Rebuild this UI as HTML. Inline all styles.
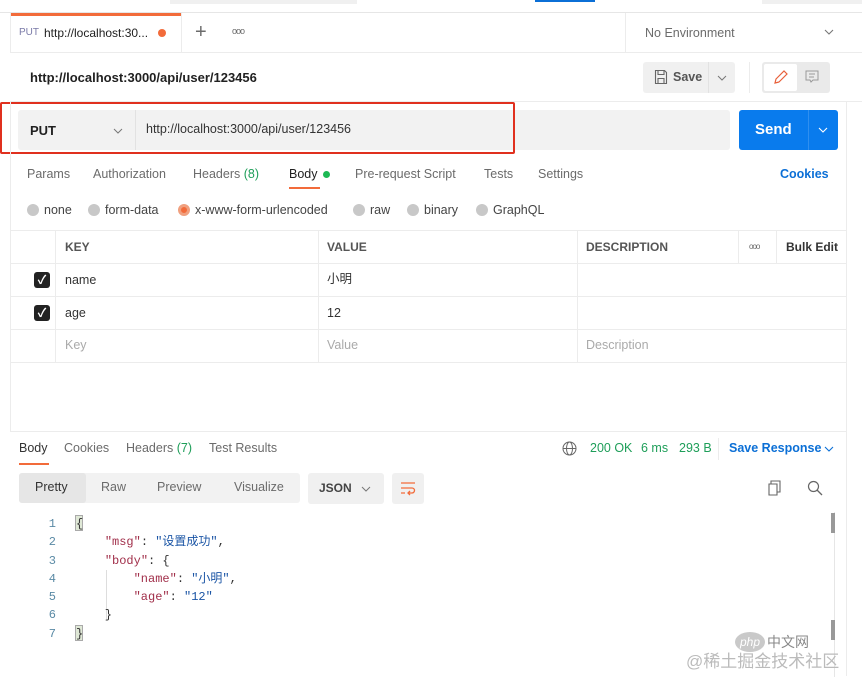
<!DOCTYPE html>
<html><head><meta charset="utf-8"><style>
*{margin:0;padding:0;box-sizing:border-box}
body{width:862px;height:675px;background:#fff;font-family:"Liberation Sans","Noto Sans CJK SC",sans-serif;font-size:12.5px;color:#212121;position:relative;overflow:hidden}
.a{position:absolute;white-space:nowrap}
.g{color:#6b6b6b}
.mono{font-family:"Liberation Mono","Noto Sans CJK SC",monospace;font-size:12px}
.hl{position:absolute;background:#ececec;height:1px}
.vl{position:absolute;background:#ececec;width:1px}
.cb{position:absolute;width:16px;height:16px;background:#222;border-radius:3px;color:#fff;font-size:12px;line-height:16px;text-align:center;font-weight:bold}
.rd{display:inline-block;width:12px;height:12px;border-radius:50%;background:#c8c8c8;vertical-align:-2px;margin-right:5px}
</style></head><body>
<div class="a" style="left:170px;top:0;width:187px;height:4px;background:#f0f0f0"></div>
<div class="a" style="left:535px;top:0;width:60px;height:2px;background:#0b6fd6"></div>
<div class="a" style="left:762px;top:0;width:100px;height:4px;background:#f0f0f0"></div>
<div class="hl" style="left:0;top:12px;width:862px;background:#e6e6e6"></div>
<div class="a" style="left:10px;top:13px;width:171px;height:3px;background:#f26b3a"></div>
<div class="vl" style="left:10px;top:13px;height:40px"></div>
<div class="vl" style="left:181px;top:13px;height:40px"></div>
<div class="a" style="left:19px;top:27px;font-size:10px;color:#7a7aa8">PUT</div>
<div class="a" style="left:44px;top:26px;font-size:12px">http://localhost:30...</div>
<div class="a" style="left:158px;top:29px;width:8px;height:8px;border-radius:50%;background:#f26b3a"></div>
<div class="a g" style="left:195px;top:21px;font-size:20px;font-weight:300">+</div>
<div class="a g" style="left:232px;top:26px;font-size:9px;letter-spacing:-1px">ooo</div>
<div class="vl" style="left:625px;top:13px;height:40px"></div>
<div class="a g" style="left:645px;top:26px">No Environment</div>
<svg class="a" style="left:824px;top:29px" width="10" height="6" viewBox="0 0 10 6"><path d="M1 1l4 4 4-4" fill="none" stroke="#777" stroke-width="1.1"/></svg>
<div class="hl" style="left:10px;top:52px;width:852px"></div>
<div class="a" style="left:30px;top:70px;font-size:13px;font-weight:bold">http://localhost:3000/api/user/123456</div>
<div class="a" style="left:643px;top:62px;width:92px;height:31px;background:#f0f0f0;border-radius:3px"></div>
<div class="vl" style="left:708px;top:62px;height:31px;background:#e2e2e2"></div>
<svg class="a" style="left:654px;top:69px" width="14" height="16" viewBox="0 0 14 16"><path d="M1.5 1.5h9l2 2v11h-11z M4 1.5v4h6v-4 M4 14.5v-5h6v5" fill="none" stroke="#666" stroke-width="1.1"/></svg>
<div class="a" style="left:673px;top:70px;font-weight:bold;color:#555">Save</div>
<svg class="a" style="left:717px;top:75px" width="10" height="6" viewBox="0 0 10 6"><path d="M1 1l4 4 4-4" fill="none" stroke="#777" stroke-width="1"/></svg>
<div class="vl" style="left:749px;top:62px;height:31px"></div>
<div class="a" style="left:762px;top:62px;width:68px;height:31px;background:#eaeaea;border-radius:3px"></div>
<div class="a" style="left:764px;top:64px;width:33px;height:27px;background:#fff;border-radius:2px"></div>
<svg class="a" style="left:772px;top:68px" width="16" height="18" viewBox="0 0 16 18"><path d="M3 15l1-4 8-8 3 3-8 8z M3 15l4-1" fill="none" stroke="#e8603a" stroke-width="1.2"/></svg>
<svg class="a" style="left:804px;top:69px" width="16" height="16" viewBox="0 0 16 16"><path d="M2 2h12v9H9l-2 2-1-2H2z M5 5h6 M5 8h5" fill="none" stroke="#999" stroke-width="1"/></svg>
<div class="hl" style="left:10px;top:101px;width:852px"></div>
<div class="a" style="left:18px;top:110px;width:712px;height:40px;background:#f2f2f2;border-radius:3px"></div>
<div class="vl" style="left:135px;top:110px;height:40px;background:#e2e2e2"></div>
<div class="a" style="left:30px;top:123px;font-weight:bold;font-size:13px">PUT</div>
<svg class="a" style="left:113px;top:128px" width="10" height="6" viewBox="0 0 10 6"><path d="M1 1l4 4 4-4" fill="none" stroke="#777" stroke-width="1"/></svg>
<div class="a" style="left:146px;top:122px;font-size:12.5px;color:#333">http://localhost:3000/api/user/123456</div>
<div class="a" style="left:739px;top:110px;width:99px;height:40px;background:#097bed;border-radius:3px"></div>
<div class="vl" style="left:808px;top:110px;height:40px;background:#2f8ff0"></div>
<div class="a" style="left:755px;top:121px;color:#fff;font-weight:bold;font-size:15px">Send</div>
<svg class="a" style="left:818px;top:127px" width="10" height="6" viewBox="0 0 10 6"><path d="M1 1l4 4 4-4" fill="none" stroke="#fff" stroke-width="1.1"/></svg>
<div class="a" style="left:0;top:102px;width:515px;height:52px;border:2px solid #e0301e;border-radius:2px"></div>
<div class="vl" style="left:10px;top:101px;height:330px"></div>
<div class="vl" style="left:846px;top:101px;height:575px"></div>
<div class="a g" style="left:27px;top:167px">Params</div>
<div class="a g" style="left:93px;top:167px">Authorization</div>
<div class="a g" style="left:193px;top:167px">Headers <span style="color:#1e9e59">(8)</span></div>
<div class="a" style="left:289px;top:167px">Body</div>
<div class="a" style="left:323px;top:171px;width:7px;height:7px;border-radius:50%;background:#1db954"></div>
<div class="a" style="left:289px;top:187px;width:31px;height:2px;background:#f26b3a"></div>
<div class="a g" style="left:355px;top:167px">Pre-request Script</div>
<div class="a g" style="left:484px;top:167px">Tests</div>
<div class="a g" style="left:538px;top:167px">Settings</div>
<div class="a" style="left:780px;top:167px;color:#0b6fd6;font-weight:bold">Cookies</div>
<div class="a" style="left:27px;top:203px;color:#444"><span class="rd"></span>none</div>
<div class="a" style="left:88px;top:203px;color:#444"><span class="rd"></span>form-data</div>
<div class="a" style="left:178px;top:203px;color:#444"><span class="rd" style="border:3px solid #f0a07f;background:#f26b3a"></span>x-www-form-urlencoded</div>
<div class="a" style="left:353px;top:203px;color:#444"><span class="rd"></span>raw</div>
<div class="a" style="left:407px;top:203px;color:#444"><span class="rd"></span>binary</div>
<div class="a" style="left:476px;top:203px;color:#444"><span class="rd"></span>GraphQL</div>
<div class="hl" style="left:10px;top:230px;width:836px"></div>
<div class="hl" style="left:10px;top:263px;width:836px"></div>
<div class="hl" style="left:10px;top:296px;width:836px"></div>
<div class="hl" style="left:10px;top:329px;width:836px"></div>
<div class="hl" style="left:10px;top:362px;width:836px"></div>
<div class="vl" style="left:55px;top:230px;height:132px"></div>
<div class="vl" style="left:318px;top:230px;height:132px"></div>
<div class="vl" style="left:577px;top:230px;height:132px"></div>
<div class="vl" style="left:738px;top:230px;height:33px"></div>
<div class="vl" style="left:776px;top:230px;height:33px"></div>
<div class="a" style="left:65px;top:240px;color:#555;font-weight:bold;font-size:12px">KEY</div>
<div class="a" style="left:327px;top:240px;color:#555;font-weight:bold;font-size:12px">VALUE</div>
<div class="a" style="left:586px;top:240px;color:#555;font-weight:bold;font-size:12px">DESCRIPTION</div>
<div class="a g" style="left:749px;top:242px;font-size:8px;letter-spacing:-1px">ooo</div>
<div class="a" style="left:786px;top:240px;font-weight:bold;font-size:12px;color:#333">Bulk Edit</div>
<div class="cb" style="left:34px;top:272px">✓</div>
<div class="a" style="left:65px;top:273px;color:#333">name</div>
<div class="a" style="left:327px;top:271px;color:#333;line-height:16px">小明</div>
<div class="cb" style="left:34px;top:305px">✓</div>
<div class="a" style="left:65px;top:306px;color:#333">age</div>
<div class="a" style="left:327px;top:306px;color:#333">12</div>
<div class="a" style="left:65px;top:338px;color:#aaa">Key</div>
<div class="a" style="left:327px;top:338px;color:#aaa">Value</div>
<div class="a" style="left:586px;top:338px;color:#aaa">Description</div>
<div class="hl" style="left:10px;top:431px;width:836px"></div>
<div class="a" style="left:19px;top:441px;color:#333">Body</div>
<div class="a" style="left:19px;top:463px;width:30px;height:2px;background:#f26b3a"></div>
<div class="a g" style="left:64px;top:441px">Cookies</div>
<div class="a g" style="left:126px;top:441px">Headers <span style="color:#1e9e59">(7)</span></div>
<div class="a g" style="left:209px;top:441px">Test Results</div>
<svg class="a" style="left:562px;top:441px" width="15" height="15" viewBox="0 0 15 15"><g fill="none" stroke="#666" stroke-width="1"><circle cx="7.5" cy="7.5" r="6.5"/><ellipse cx="7.5" cy="7.5" rx="3" ry="6.5"/><path d="M1 7.5h13"/></g></svg>
<div class="a" style="left:590px;top:441px;color:#1e9e59">200 OK</div>
<div class="a" style="left:641px;top:441px;color:#1e9e59">6 ms</div>
<div class="a" style="left:679px;top:441px;color:#1e9e59">293 B</div>
<div class="vl" style="left:718px;top:438px;height:22px"></div>
<div class="a" style="left:729px;top:441px;color:#0b6fd6;font-weight:bold">Save Response</div>
<svg class="a" style="left:824px;top:446px" width="10" height="6" viewBox="0 0 10 6"><path d="M1 1l4 4 4-4" fill="none" stroke="#0b6fd6" stroke-width="1.1"/></svg>
<div class="a" style="left:19px;top:473px;width:281px;height:30px;background:#f2f2f2;border-radius:3px"></div>
<div class="a" style="left:19px;top:473px;width:67px;height:30px;background:#e6e6e6;border-radius:3px"></div>
<div class="a" style="left:35px;top:480px;color:#333">Pretty</div>
<div class="a g" style="left:101px;top:480px">Raw</div>
<div class="a g" style="left:157px;top:480px">Preview</div>
<div class="a g" style="left:234px;top:480px">Visualize</div>
<div class="a" style="left:308px;top:473px;width:76px;height:31px;background:#f0f0f0;border-radius:3px"></div>
<div class="a" style="left:319px;top:481px;color:#444;font-weight:bold;font-size:12px">JSON</div>
<svg class="a" style="left:361px;top:486px" width="10" height="6" viewBox="0 0 10 6"><path d="M1 1l4 4 4-4" fill="none" stroke="#777" stroke-width="1"/></svg>
<div class="a" style="left:392px;top:473px;width:32px;height:31px;background:#f0f0f0;border-radius:3px"></div>
<svg class="a" style="left:400px;top:480px" width="16" height="16" viewBox="0 0 16 16"><path d="M1 3h14 M1 8h11a2.5 2.5 0 010 5H8 M10 11l-2 2 2 2 M1 13h4" fill="none" stroke="#f26b3a" stroke-width="1.3"/></svg>
<svg class="a" style="left:767px;top:480px" width="16" height="17" viewBox="0 0 16 17"><path d="M4 4V1h9v11h-3 M2 4h8v11H2z" fill="none" stroke="#666" stroke-width="1.1"/></svg>
<svg class="a" style="left:807px;top:480px" width="16" height="16" viewBox="0 0 16 16"><circle cx="6.5" cy="6.5" r="5" fill="none" stroke="#666" stroke-width="1.2"/><path d="M10 10l5 5" stroke="#666" stroke-width="1.3"/></svg>
<div class="a mono" style="left:44px;top:515px;color:#5a8aa5;line-height:18.3px;text-align:right;width:12px">1<br>2<br>3<br>4<br>5<br>6<br>7</div>
<div class="vl" style="left:106px;top:570px;height:50px;background:#ddd"></div>
<div class="a" style="left:75px;top:515px;width:8px;height:16px;background:#dfe8d6;border:1px solid #aaa"></div>
<div class="a" style="left:75px;top:625px;width:8px;height:16px;background:#dfe8d6;border:1px solid #aaa"></div>
<div class="a mono" style="left:76px;top:515px;line-height:18.3px;color:#333">{<br>&nbsp;&nbsp;&nbsp;&nbsp;<span style="color:#a12f4a">"msg"</span>: <span style="color:#1b55a5">"设置成功"</span>,<br>&nbsp;&nbsp;&nbsp;&nbsp;<span style="color:#a12f4a">"body"</span>: {<br>&nbsp;&nbsp;&nbsp;&nbsp;&nbsp;&nbsp;&nbsp;&nbsp;<span style="color:#a12f4a">"name"</span>: <span style="color:#1b55a5">"小明"</span>,<br>&nbsp;&nbsp;&nbsp;&nbsp;&nbsp;&nbsp;&nbsp;&nbsp;<span style="color:#a12f4a">"age"</span>: <span style="color:#1b55a5">"12"</span><br>&nbsp;&nbsp;&nbsp;&nbsp;}<br>}</div>
<div class="vl" style="left:834px;top:512px;height:165px;background:#e6e6e6"></div>
<div class="a" style="left:831px;top:513px;width:4px;height:20px;background:#999"></div>
<div class="a" style="left:831px;top:620px;width:4px;height:20px;background:#999"></div>
<div class="a" style="left:735px;top:632px;width:30px;height:20px;border-radius:50%;background:#c9c9c9;color:#fff;font-size:12px;text-align:center;line-height:20px;font-style:italic">php</div>
<div class="a" style="left:767px;top:632px;color:#888;font-size:14px">中文网</div>
<div class="a" style="left:686px;top:647px;color:#bbb;font-size:17px">@稀土掘金技术社区</div>
</body></html>
